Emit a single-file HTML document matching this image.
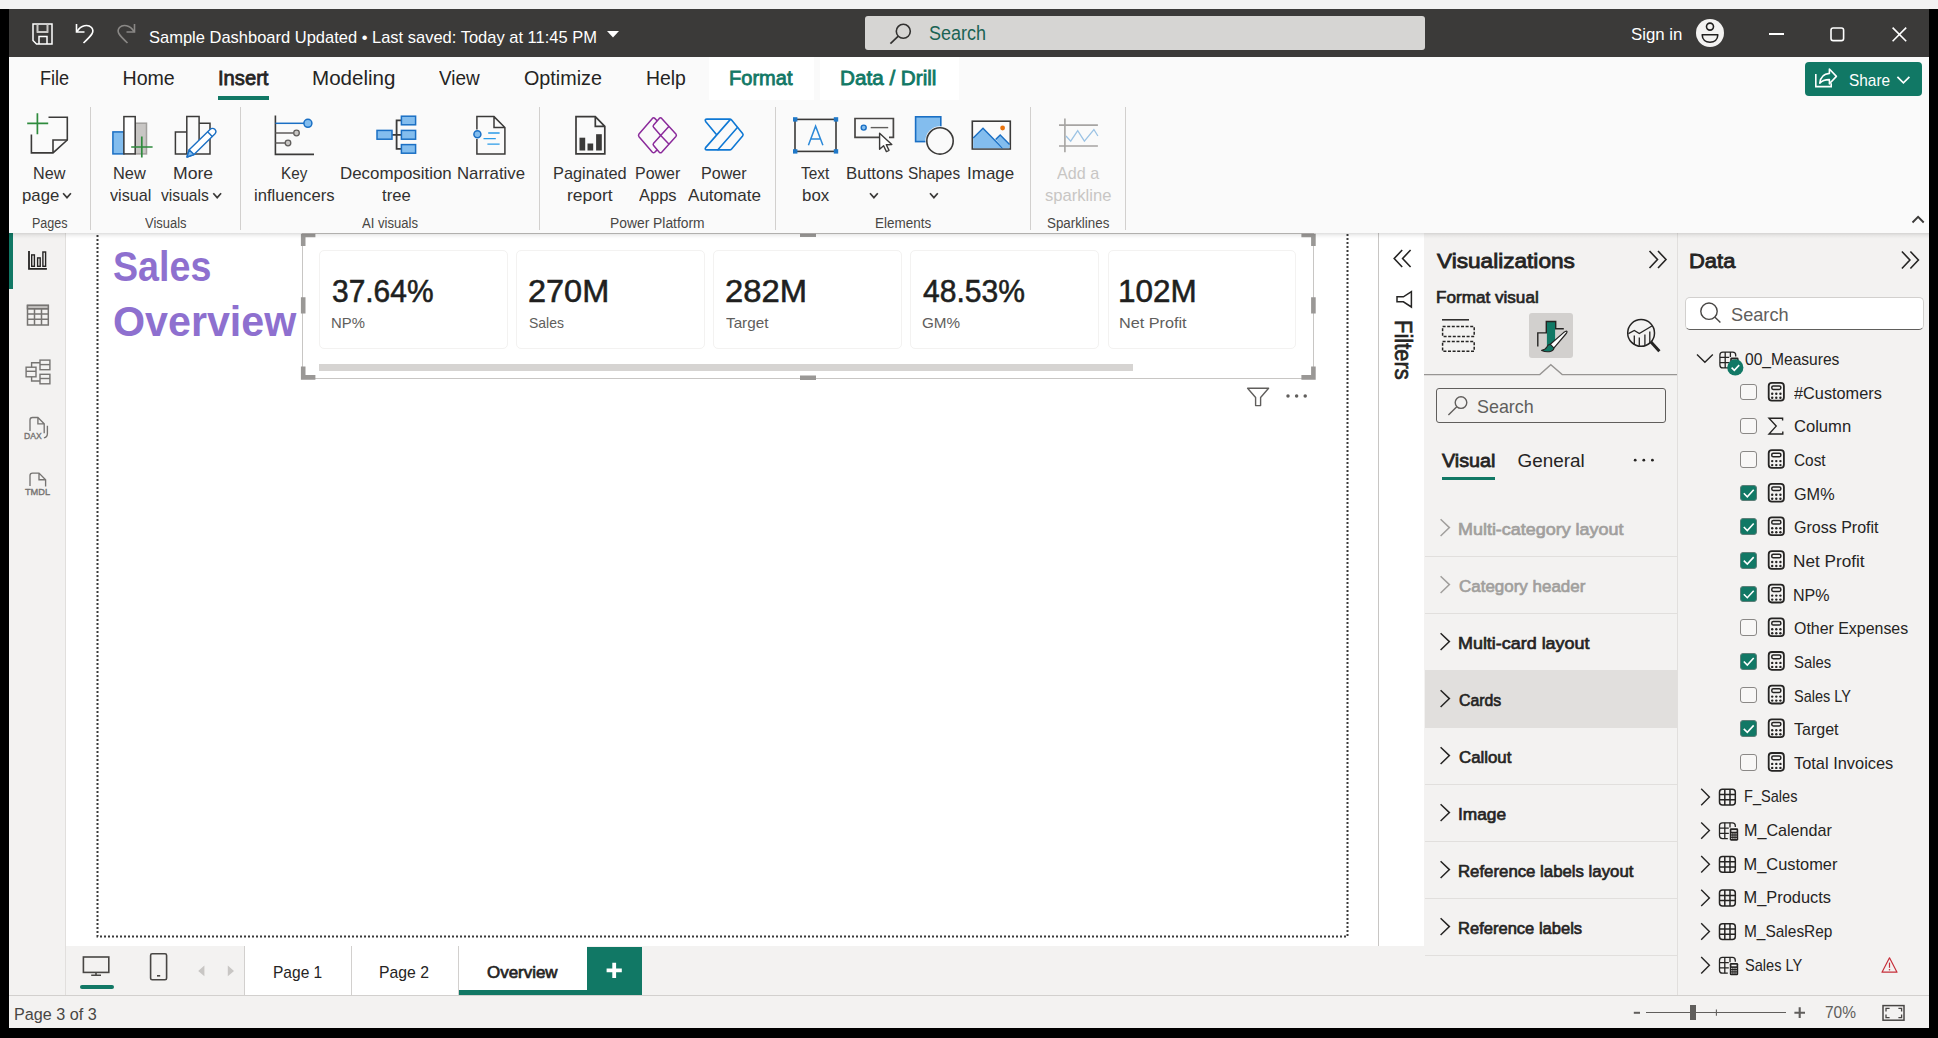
<!DOCTYPE html>
<html><head><meta charset="utf-8"><title>Power BI Desktop</title><style>
html,body{margin:0;padding:0;}
body{width:1938px;height:1038px;background:#000;position:relative;overflow:hidden;font-family:"Liberation Sans",sans-serif;}
body>div,body>svg,body>span{position:absolute;}
body>span{white-space:pre;line-height:1;transform-origin:0 0;}
svg{overflow:visible;}
</style></head>
<body>
<div style="left:0px;top:0px;width:1938px;height:9px;background:#f2f2f2;"></div>
<div style="left:9px;top:9px;width:1920px;height:48px;background:#3b3a39;"></div>
<div style="left:9px;top:57px;width:1920px;height:176px;background:#fafafa;"></div>
<div style="left:9px;top:233px;width:57px;height:763px;background:#f3f2f1;"></div>
<div style="left:65px;top:233px;width:1px;height:763px;background:#e1dfdd;"></div>
<div style="left:66px;top:233px;width:1313px;height:713px;background:#fff;"></div>
<div style="left:66px;top:946px;width:1359px;height:50px;background:#f3f2f1;"></div>
<div style="left:1378px;top:233px;width:1px;height:713px;background:#c8c6c4;"></div>
<div style="left:1379px;top:233px;width:45px;height:713px;background:#fff;"></div>
<div style="left:1424px;top:233px;width:505px;height:763px;background:#f3f2f1;"></div>
<div style="left:1677px;top:233px;width:1px;height:763px;background:#e1dfdd;"></div>
<div style="left:9px;top:995px;width:1920px;height:1px;background:#d2d0ce;"></div>
<div style="left:9px;top:996px;width:1920px;height:32px;background:#f3f2f1;"></div>
<svg style="left:32px;top:22.6px;" width="21" height="22" viewBox="0 0 21 22"><path d="M1 1h19v20H4.5L1 17.5z M5.5 1v8h10V1 M7 21v-7.5h8V21" fill="none" stroke="#fff" stroke-width="1.5"/><path d="M5.5 1v8h10V1" fill="none" stroke="#c8c6c4" stroke-width="1.5"/></svg>
<svg style="left:75px;top:23px;" width="20" height="21" viewBox="0 0 20 21"><path d="M1.5 1v8h8" fill="none" stroke="#fff" stroke-width="1.6"/><path d="M2 8.5C6 2 13 1 16.5 4.5 20 8.5 17 12 8.5 20" fill="none" stroke="#fff" stroke-width="1.6"/></svg>
<svg style="left:116px;top:23px;" width="20" height="21" viewBox="0 0 20 21"><path d="M18.5 1v8h-8" fill="none" stroke="#8a8886" stroke-width="1.6"/><path d="M18 8.5C14 2 7 1 3.5 4.5 0 8.5 3 12 11.5 20" fill="none" stroke="#8a8886" stroke-width="1.6"/></svg>
<span style="left:149.3px;top:29.0px;font-size:17px;color:#ffffff;transform:scaleX(0.9700);">Sample Dashboard Updated • Last saved: Today at 11:45 PM</span>
<svg style="left:607px;top:31px;" width="12" height="7" viewBox="0 0 12 7"><path d="M0 0h12L6 6.5z" fill="#fff"/></svg>
<div style="left:865px;top:16px;width:560px;height:34px;background:#d6d5d3;border-radius:3px;"></div>
<svg style="left:0;top:0" width="1938" height="1038" viewBox="0 0 1938 1038"><circle cx="903.3" cy="31.3" r="7" fill="none" stroke="#323130" stroke-width="1.6"/><path d="M898.3 36.2L890.4 43.6" stroke="#323130" stroke-width="1.7" fill="none"/></svg>
<span style="left:928.5px;top:24.0px;font-size:19.5px;color:#1b6354;transform:scaleX(0.9222);">Search</span>
<span style="left:1631.0px;top:26.0px;font-size:17px;color:#ffffff;transform:scaleX(0.9898);">Sign in</span>
<svg style="left:1696px;top:19px;" width="28" height="28" viewBox="0 0 28 28"><circle cx="14" cy="14" r="14" fill="#f3f2f1"/><circle cx="14" cy="7.6" r="3.5" fill="none" stroke="#201f1e" stroke-width="1.6"/><path d="M6.2 15.8h15.6c0 5-3.6 7.4-7.8 7.4s-7.8-2.4-7.8-7.4z" fill="none" stroke="#201f1e" stroke-width="1.6" stroke-linejoin="round"/></svg>
<div style="left:1769px;top:33px;width:15px;height:1.5px;background:#ffffff;"></div>
<svg style="left:1830px;top:27px;" width="16" height="16" viewBox="0 0 16 16"><rect x="1" y="1" width="12.6" height="12.6" rx="2.2" fill="none" stroke="#fff" stroke-width="1.6"/></svg>
<svg style="left:1892px;top:27px;" width="15" height="15" viewBox="0 0 15 15"><path d="M0.6 0.6l13.6 13.6M14.2 0.6l-13.6 13.6" stroke="#fff" stroke-width="1.6"/></svg>
<div style="left:709px;top:57px;width:104.5px;height:43px;background:#fff;"></div>
<div style="left:820px;top:57px;width:138.5px;height:43px;background:#fff;"></div>
<span style="left:40.1px;top:69.0px;font-size:19.6px;color:#252423;transform:scaleX(0.9226);">File</span>
<span style="left:122.5px;top:69.0px;font-size:19.6px;color:#252423;">Home</span>
<span style="left:217.5px;top:69.0px;font-size:19.6px;color:#252423;-webkit-text-stroke:0.78px #252423;transform:scaleX(1.0297);">Insert</span>
<span style="left:311.9px;top:69.0px;font-size:19.6px;color:#252423;transform:scaleX(1.0500);">Modeling</span>
<span style="left:439.0px;top:69.0px;font-size:19.6px;color:#252423;transform:scaleX(0.9659);">View</span>
<span style="left:524.0px;top:69.0px;font-size:19.6px;color:#252423;transform:scaleX(1.0077);">Optimize</span>
<span style="left:646.0px;top:69.0px;font-size:19.6px;color:#252423;transform:scaleX(0.9898);">Help</span>
<span style="left:729.0px;top:69.0px;font-size:19.6px;color:#117865;-webkit-text-stroke:0.78px #117865;transform:scaleX(1.0226);">Format</span>
<span style="left:840.4px;top:69.0px;font-size:19.6px;color:#117865;-webkit-text-stroke:0.78px #117865;transform:scaleX(1.0544);">Data / Drill</span>
<div style="left:218px;top:95.8px;width:51px;height:4px;background:#117865;"></div>
<div style="left:1805px;top:62px;width:117px;height:34px;background:#117865;border-radius:4px;"></div>
<svg style="left:0;top:0" width="1938" height="1038" viewBox="0 0 1938 1038"><g fill="none" stroke="#fff" stroke-width="1.6"><path d="M1815.8 74v12.6h15.4v-3.4"/><path d="M1829.4 69l7 7.4-7 7.4v-4.2c-4.4 0-7.4 1-9.6 3.6 .6-5.6 4-9.4 9.6-9.8z" stroke-linejoin="round"/><path d="M1897.4 76.8l6 6 6-6" stroke-width="1.7"/></g></svg>
<span style="left:1848.6px;top:72.0px;font-size:16.4px;color:#ffffff;transform:scaleX(0.9399);">Share</span>
<div style="left:90px;top:107px;width:1px;height:123px;background:#d2d0ce;"></div>
<div style="left:240px;top:107px;width:1px;height:123px;background:#d2d0ce;"></div>
<div style="left:539px;top:107px;width:1px;height:123px;background:#d2d0ce;"></div>
<div style="left:775px;top:107px;width:1px;height:123px;background:#d2d0ce;"></div>
<div style="left:1030px;top:107px;width:1px;height:123px;background:#d2d0ce;"></div>
<div style="left:1125px;top:107px;width:1px;height:123px;background:#d2d0ce;"></div>
<svg style="left:0;top:0" width="1938" height="1038" viewBox="0 0 1938 1038"><g fill="none" stroke="#3b3a39" stroke-width="1.6"><path d="M48.5 117.3H67.3V140L53 152.9H31.4V134.5"/><path d="M67.3 140H53V152.9" /></g><path d="M27.2 123.3h21M37.4 113.2v21" stroke="#2e8b3d" stroke-width="1.7" fill="none"/></svg>
<span style="left:32.6px;top:166.0px;font-size:16.6px;color:#323130;transform:scaleX(0.9755);">New</span>
<span style="left:22.3px;top:188.0px;font-size:16.6px;color:#323130;transform:scaleX(1.0116);">page</span>
<svg style="left:0;top:0" width="1938" height="1038" viewBox="0 0 1938 1038"><path d="M63.1 193.2l3.9 4.4 3.9 -4.4" fill="none" stroke="#3b3a39" stroke-width="1.7"/></svg>
<svg style="left:0;top:0" width="1938" height="1038" viewBox="0 0 1938 1038"><rect x="112.9" y="131.9" width="11" height="22" fill="#83bdee" stroke="#1a6fc4" stroke-width="1.5"/><rect x="135.2" y="123.2" width="11.3" height="30.7" fill="#c8c6c4" stroke="#a19f9d" stroke-width="1.5"/><rect x="123.9" y="116.6" width="11.3" height="37.3" fill="#fff" stroke="#3b3a39" stroke-width="1.5"/><path d="M131.2 147h21.4M141.8 136.5v21" stroke="#2e8b3d" stroke-width="1.7" fill="none"/></svg>
<span style="left:113.2px;top:166.0px;font-size:16.6px;color:#323130;transform:scaleX(0.9876);">New</span>
<span style="left:110.2px;top:188.0px;font-size:16.6px;color:#323130;transform:scaleX(0.9775);">visual</span>
<svg style="left:0;top:0" width="1938" height="1038" viewBox="0 0 1938 1038"><g fill="none" stroke="#3b3a39" stroke-width="1.5"><path d="M186.8 131.9H175.4V153.9H210V123.2H199.1"/><path d="M186.8 153.9V116.6H199.1V140"/></g><g stroke="#1a6fc4" stroke-width="1.4" stroke-linejoin="round"><path d="M187 157l2.2-7.3 20.8-20.3c1.5-1.5 3.6-1.3 4.8-.1 1.3 1.3 1.4 3.3 0 4.8L194 154.6z" fill="#fff"/><path d="M187 157l2.2-7.3 4.8 4.9z" fill="#83bdee"/><path d="M207.6 131.8l4.9 4.9" fill="none"/></g></svg>
<span style="left:173.1px;top:166.0px;font-size:16.6px;color:#323130;transform:scaleX(1.0608);">More</span>
<span style="left:161.4px;top:188.0px;font-size:16.6px;color:#323130;transform:scaleX(0.9440);">visuals</span>
<svg style="left:0;top:0" width="1938" height="1038" viewBox="0 0 1938 1038"><path d="M213.3 193.2l3.9 4.4 3.9 -4.4" fill="none" stroke="#3b3a39" stroke-width="1.7"/></svg>
<svg style="left:0;top:0" width="1938" height="1038" viewBox="0 0 1938 1038"><path d="M275.4 115.4V154.4H314" fill="none" stroke="#3b3a39" stroke-width="1.6"/><path d="M275.4 123.3H304" stroke="#1a6fc4" stroke-width="1.5"/><circle cx="307.9" cy="123.3" r="4" fill="#83bdee" stroke="#1a6fc4" stroke-width="1.5"/><path d="M275.4 133H293.5M275.4 143H285" stroke="#605e5c" stroke-width="1.5"/><circle cx="296.5" cy="133" r="2.8" fill="#c8c6c4" stroke="#605e5c" stroke-width="1.3"/><circle cx="288" cy="143" r="2.8" fill="#c8c6c4" stroke="#605e5c" stroke-width="1.3"/></svg>
<span style="left:281.1px;top:166.0px;font-size:16.6px;color:#323130;transform:scaleX(0.9188);">Key</span>
<span style="left:254.2px;top:188.0px;font-size:16.6px;color:#323130;transform:scaleX(1.0032);">influencers</span>
<svg style="left:0;top:0" width="1938" height="1038" viewBox="0 0 1938 1038"><path d="M392.1 134.8H401M401 120.4H396.6V148.9H401" fill="none" stroke="#3b3a39" stroke-width="1.8"/><g fill="#83bdee" stroke="#1a6fc4" stroke-width="1.5"><rect x="377" y="130.4" width="15" height="8.8"/><rect x="401.4" y="116.2" width="14.2" height="8.6"/><rect x="401.4" y="130.4" width="14.2" height="8.8"/><rect x="401.4" y="144.6" width="14.2" height="8.6"/></g></svg>
<span style="left:339.9px;top:166.0px;font-size:16.6px;color:#323130;transform:scaleX(1.0182);">Decomposition</span>
<span style="left:382.0px;top:188.0px;font-size:16.6px;color:#323130;transform:scaleX(1.0048);">tree</span>
<svg style="left:0;top:0" width="1938" height="1038" viewBox="0 0 1938 1038"><path d="M476.9 129.5V116.6H494L504.9 127.5V153.9H476.9V139M494 116.6V127.5H504.9" fill="none" stroke="#3b3a39" stroke-width="1.5"/><circle cx="477.4" cy="134.2" r="3.5" fill="#83bdee" stroke="#1a6fc4" stroke-width="1.5"/><path d="M488.2 133H499.6M483.5 138.6H495.8M487.4 144.2H499.6" stroke="#2b9be8" stroke-width="1.3"/></svg>
<span style="left:456.9px;top:166.0px;font-size:16.6px;color:#323130;transform:scaleX(1.0108);">Narrative</span>
<svg style="left:0;top:0" width="1938" height="1038" viewBox="0 0 1938 1038"><path d="M576 116.7H595.3L604.8 126.3V153.8H576zM595.3 116.7V126.3H604.8" fill="none" stroke="#3b3a39" stroke-width="1.7"/><g fill="#3b3a39"><rect x="579.5" y="137.7" width="5.7" height="12.8"/><rect x="587.5" y="143.5" width="5.7" height="7"/><rect x="596.1" y="134.2" width="5.7" height="16.3"/></g></svg>
<span style="left:553.4px;top:166.0px;font-size:16.6px;color:#323130;transform:scaleX(0.9849);">Paginated</span>
<span style="left:566.9px;top:188.0px;font-size:16.6px;color:#323130;transform:scaleX(1.0529);">report</span>
<svg style="left:0;top:0" width="1938" height="1038" viewBox="0 0 1938 1038"><g fill="none" stroke="#8b2a9b" stroke-width="1.5" stroke-linejoin="round" stroke-linecap="round"><path d="M656.6 120.2L654.8 118.4Q653.6 117.2 652.4 118.4L639 133.9Q638 135.3 639 136.7L652.4 152.2Q653.6 153.4 654.8 152.2L656.6 150.4"/><path d="M660.5 135.2L653.6 127.3Q652.6 126.1 653.6 124.9L659.3 118.4Q660.5 117.2 661.7 118.4L675.9 133.9Q676.9 135.2 675.9 136.5L661.7 152.2Q660.5 153.4 659.3 152.2L653.6 145.6Q652.6 144.4 653.6 143.2L668.6 126.8"/><path d="M660.5 135.2L668.6 143.8"/></g></svg>
<span style="left:634.6px;top:166.0px;font-size:16.6px;color:#323130;transform:scaleX(0.9633);">Power</span>
<span style="left:639.0px;top:188.0px;font-size:16.6px;color:#323130;transform:scaleX(0.9940);">Apps</span>
<svg style="left:0;top:0" width="1938" height="1038" viewBox="0 0 1938 1038"><g fill="none" stroke="#0f78d4" stroke-width="1.6" stroke-linejoin="round" stroke-linecap="round"><path d="M716.2 134.3L705.6 121.5Q704.4 119.2 707 119.1H729.6Q730.8 119.1 731.6 120.1L742.6 133.5Q743.6 134.8 742.6 136.1L731.6 149Q730.8 149.9 729.6 149.9H707Q704.4 149.8 705.6 147.6L730.4 119.4"/><path d="M737.4 127.5L717.9 149.7"/></g></svg>
<span style="left:701.3px;top:166.0px;font-size:16.6px;color:#323130;transform:scaleX(0.9719);">Power</span>
<span style="left:688.2px;top:188.0px;font-size:16.6px;color:#323130;transform:scaleX(1.0283);">Automate</span>
<svg style="left:0;top:0" width="1938" height="1038" viewBox="0 0 1938 1038"><rect x="795" y="119.4" width="41" height="32" fill="none" stroke="#3b3a39" stroke-width="1.6"/><g fill="#1f78c8"><rect x="793" y="117.2" width="4.4" height="4.4"/><rect x="833.8" y="117.2" width="4.4" height="4.4"/><rect x="793" y="149.2" width="4.4" height="4.4"/><rect x="833.8" y="149.2" width="4.4" height="4.4"/></g><path d="M808.4 145.2L815.6 126.2 822.9 145.2M810.8 139H820.5" fill="none" stroke="#2b88d8" stroke-width="1.5"/></svg>
<span style="left:801.4px;top:166.0px;font-size:16.6px;color:#323130;transform:scaleX(0.9279);">Text</span>
<span style="left:801.6px;top:188.0px;font-size:16.6px;color:#323130;transform:scaleX(1.0167);">box</span>
<svg style="left:0;top:0" width="1938" height="1038" viewBox="0 0 1938 1038"><path d="M879 137.4H855V118.5H893.4V137.4H889" fill="none" stroke="#484644" stroke-width="1.7"/><circle cx="863.7" cy="127.6" r="2.5" fill="#83bdee" stroke="#1a6fc4" stroke-width="1.4"/><path d="M870.7 127.6H888.2" stroke="#605e5c" stroke-width="1.4"/><path d="M879.6 133.3V149.3L883.6 145.8 886.4 151.6 889 150.4 886.3 144.7 891.8 144.5z" fill="#fff" stroke="#3b3a39" stroke-width="1.4" stroke-linejoin="round"/></svg>
<span style="left:845.7px;top:166.0px;font-size:16.6px;color:#323130;transform:scaleX(1.0168);">Buttons</span>
<svg style="left:0;top:0" width="1938" height="1038" viewBox="0 0 1938 1038"><path d="M870 193.2l3.9 4.4 3.9 -4.4" fill="none" stroke="#3b3a39" stroke-width="1.7"/></svg>
<svg style="left:0;top:0" width="1938" height="1038" viewBox="0 0 1938 1038"><rect x="915.6" y="116.8" width="25.2" height="24.8" fill="#83bdee" stroke="#1a6fc4" stroke-width="1.6"/><circle cx="940" cy="140.9" r="14.6" fill="#fafafa"/><circle cx="940" cy="140.9" r="13.2" fill="#fafafa" stroke="#3b3a39" stroke-width="1.6"/></svg>
<span style="left:908.4px;top:166.0px;font-size:16.6px;color:#323130;transform:scaleX(0.9253);">Shapes</span>
<svg style="left:0;top:0" width="1938" height="1038" viewBox="0 0 1938 1038"><path d="M930 193.2l3.9 4.4 3.9 -4.4" fill="none" stroke="#3b3a39" stroke-width="1.7"/></svg>
<svg style="left:0;top:0" width="1938" height="1038" viewBox="0 0 1938 1038"><rect x="972.3" y="121.2" width="38" height="27.8" fill="#fafafa" stroke="#3b3a39" stroke-width="1.6"/><path d="M973.2 148.2V138L983 128.2 1002.6 148.2z" fill="#83bdee"/><path d="M973.2 138L983 128.2 1002.6 148.2" fill="none" stroke="#1a6fc4" stroke-width="1.4"/><path d="M995.6 139.6L1000.2 135.1 1009.6 144.4V148.2H1003z" fill="#83bdee"/><path d="M995.6 139.6L1000.2 135.1 1009.6 144.4" fill="none" stroke="#1a6fc4" stroke-width="1.4"/><circle cx="1002.6" cy="128" r="2.4" fill="#e8710a"/></svg>
<span style="left:967.0px;top:166.0px;font-size:16.6px;color:#323130;transform:scaleX(1.0247);">Image</span>
<svg style="left:0;top:0" width="1938" height="1038" viewBox="0 0 1938 1038"><path d="M1064.9 118.4V152.3M1059 125.1H1097.9M1059 146H1097.9" stroke="#a6a4a2" stroke-width="1.6" fill="none"/><path d="M1066 136L1070.7 141.2 1077.7 130.7 1084.4 141.2 1093.9 129.5 1097.9 136" fill="none" stroke="#9cc3e4" stroke-width="1.3"/></svg>
<span style="left:1056.7px;top:166.0px;font-size:16.6px;color:#c8c6c4;transform:scaleX(0.9720);">Add a</span>
<span style="left:1045.0px;top:188.0px;font-size:16.6px;color:#c8c6c4;">sparkline</span>
<span style="left:31.5px;top:216.0px;font-size:14px;color:#484644;transform:scaleX(0.8967);">Pages</span>
<span style="left:145.0px;top:216.0px;font-size:14px;color:#484644;transform:scaleX(0.9247);">Visuals</span>
<span style="left:362.0px;top:216.0px;font-size:14px;color:#484644;transform:scaleX(0.9347);">AI visuals</span>
<span style="left:610.0px;top:216.0px;font-size:14px;color:#484644;transform:scaleX(0.9890);">Power Platform</span>
<span style="left:875.0px;top:216.0px;font-size:14px;color:#484644;transform:scaleX(0.9624);">Elements</span>
<span style="left:1047.0px;top:216.0px;font-size:14px;color:#484644;transform:scaleX(0.9531);">Sparklines</span>
<svg style="left:0;top:0" width="1938" height="1038" viewBox="0 0 1938 1038"><path d="M1912.5 222.5l5.6-5.6 5.6 5.6" fill="none" stroke="#3b3a39" stroke-width="1.9"/></svg>
<div style="left:9px;top:233px;width:4px;height:55.8px;background:#117865;"></div>
<svg style="left:0;top:0" width="1938" height="1038" viewBox="0 0 1938 1038"><g fill="none" stroke="#252423"><path d="M29 251V268.9H46.9" stroke-width="1.8"/><g stroke-width="1.4"><rect x="31.7" y="254.9" width="2.7" height="11.4"/><rect x="37.6" y="257.9" width="2.6" height="8.4"/><rect x="42.9" y="252" width="2.7" height="14.3"/></g></g></svg>
<svg style="left:0;top:0" width="1938" height="1038" viewBox="0 0 1938 1038"><g fill="none" stroke="#767472" stroke-width="1.5"><rect x="27.5" y="305.4" width="20.8" height="19.6"/><rect x="27.5" y="305.4" width="20.8" height="3.3" fill="#c8c6c4"/><path d="M27.5 308.7H48.3M27.5 313.9H48.3M27.5 319.2H48.3M34.5 308.7V325M41.5 308.7V325"/></g></svg>
<svg style="left:0;top:0" width="1938" height="1038" viewBox="0 0 1938 1038"><g fill="none" stroke="#767472" stroke-width="1.4"><rect x="26.1" y="367.2" width="9.9" height="9.6"/><path d="M26.1 371.3H36"/><rect x="40" y="360.1" width="9.9" height="9.6"/><path d="M40 364.6H49.9"/><rect x="40" y="374.3" width="9.9" height="9.5"/><path d="M40 378.5H49.9"/><path d="M31.6 367.2V362.8H40M31.6 376.8V381H40"/></g></svg>
<svg style="left:0;top:0" width="1938" height="1038" viewBox="0 0 1938 1038"><g fill="none" stroke="#767472" stroke-width="1.35"><path d="M30 431V420Q30 417.5 32.5 417.5H37.9L44.2 423.8V433.2M37.9 417.6V423.8H44.2"/><path d="M47.4 425.8V433.6Q47.4 437.4 43.9 437.8"/></g></svg>
<span style="left:23.9px;top:431.0px;font-size:9.4px;color:#767472;-webkit-text-stroke:0.38px #767472;transform:scaleX(0.9139);">DAX</span>
<svg style="left:0;top:0" width="1938" height="1038" viewBox="0 0 1938 1038"><g fill="none" stroke="#767472" stroke-width="1.35"><path d="M30 486V475.6Q30 473.1 32.5 473.1H39L45.6 479.7V486.4M39 473.2V479.7H45.6"/></g></svg>
<span style="left:25.2px;top:487.0px;font-size:9.6px;color:#767472;-webkit-text-stroke:0.38px #767472;transform:scaleX(0.9597);">TMDL</span>
<svg style="left:0;top:0" width="1938" height="1038" viewBox="0 0 1938 1038"><path d="M97.5 233V936.5H1347.5V233" fill="none" stroke="#3a3a3a" stroke-width="2" stroke-dasharray="2 2" stroke-dashoffset="-2"/></svg>
<span style="left:113.4px;top:246.0px;font-size:42.3px;color:#8e70cf;font-weight:700;transform:scaleX(0.8897);">Sales</span>
<span style="left:113.2px;top:301.0px;font-size:42.3px;color:#8e70cf;font-weight:700;transform:scaleX(0.9743);">Overview</span>
<div style="left:302.4px;top:233.4px;width:1011.9px;height:145.6px;background:#fff;border:1px solid #c8c6c4;box-sizing:border-box;"></div>
<div style="left:319.3px;top:250.3px;width:188.4px;height:98.4px;background:#fff;border:1px solid #f3f2f1;border-radius:5px;box-sizing:border-box;"></div>
<span style="left:331.6px;top:276.0px;font-size:30.5px;color:#201f1e;-webkit-text-stroke:0.55px #201f1e;transform:scaleX(0.9812);">37.64%</span>
<span style="left:331.0px;top:316.0px;font-size:14.8px;color:#605e5c;transform:scaleX(1.0044);">NP%</span>
<div style="left:516.35px;top:250.3px;width:188.4px;height:98.4px;background:#fff;border:1px solid #f3f2f1;border-radius:5px;box-sizing:border-box;"></div>
<span style="left:528.2px;top:276.0px;font-size:30.5px;color:#201f1e;-webkit-text-stroke:0.55px #201f1e;transform:scaleX(1.0646);">270M</span>
<span style="left:528.7px;top:316.0px;font-size:14.8px;color:#605e5c;transform:scaleX(0.9450);">Sales</span>
<div style="left:713.4px;top:250.3px;width:188.4px;height:98.4px;background:#fff;border:1px solid #f3f2f1;border-radius:5px;box-sizing:border-box;"></div>
<span style="left:725.2px;top:276.0px;font-size:30.5px;color:#201f1e;-webkit-text-stroke:0.55px #201f1e;transform:scaleX(1.0743);">282M</span>
<span style="left:725.7px;top:316.0px;font-size:14.8px;color:#605e5c;transform:scaleX(1.0314);">Target</span>
<div style="left:910.45px;top:250.3px;width:188.4px;height:98.4px;background:#fff;border:1px solid #f3f2f1;border-radius:5px;box-sizing:border-box;"></div>
<span style="left:923.0px;top:276.0px;font-size:30.5px;color:#201f1e;-webkit-text-stroke:0.55px #201f1e;transform:scaleX(0.9852);">48.53%</span>
<span style="left:922.4px;top:316.0px;font-size:14.8px;color:#605e5c;transform:scaleX(1.0316);">GM%</span>
<div style="left:1107.5px;top:250.3px;width:188.4px;height:98.4px;background:#fff;border:1px solid #f3f2f1;border-radius:5px;box-sizing:border-box;"></div>
<span style="left:1118.1px;top:276.0px;font-size:30.5px;color:#201f1e;-webkit-text-stroke:0.55px #201f1e;transform:scaleX(1.0308);">102M</span>
<span style="left:1118.5px;top:316.0px;font-size:14.8px;color:#605e5c;transform:scaleX(1.0964);">Net Profit</span>
<div style="left:319.2px;top:364px;width:814.2px;height:7.3px;background:#d6d4d2;"></div>
<svg style="left:0;top:0" width="1938" height="1038" viewBox="0 0 1938 1038"><clipPath id="cv"><rect x="66" y="233.8" width="1313" height="712"/></clipPath><g clip-path="url(#cv)" fill="none" stroke="#9a9896" stroke-width="4.6"><path d="M303.2 246V235H315.4"/><path d="M1301.4 235H1313.4V246"/><path d="M303.2 366.4V377.4H315.4"/><path d="M1301.4 377.4H1313.4V366.4"/><path d="M800 234.8H816M800 377.8H816M303.2 297.2V313.6M1313.4 297.2V313.6"/></g></svg>
<svg style="left:0;top:0" width="1938" height="1038" viewBox="0 0 1938 1038"><path d="M1247.6 388.2H1268.6L1260.6 397.5V405.6H1255.6V397.5z" fill="none" stroke="#605e5c" stroke-width="1.4" stroke-linejoin="round"/><g fill="#605e5c"><circle cx="1288" cy="396" r="1.75"/><circle cx="1296.6" cy="396" r="1.75"/><circle cx="1305.2" cy="396" r="1.75"/></g></svg>
<svg style="left:0;top:0" width="1938" height="1038" viewBox="0 0 1938 1038"><g fill="none" stroke="#252423" stroke-width="1.6"><path d="M1402.2 250l-8 8.5 8 8.5M1410.6 250l-8 8.5 8 8.5"/><path d="M1411.4 291.6V307L1403.4 301.8H1397V296.8H1403.4z" stroke-linejoin="miter" stroke-width="1.5"/></g></svg>
<span style="left:1414.6px;top:319.6px;font-size:24.4px;-webkit-text-stroke:0.7px #252423;color:#252423;transform:rotate(90deg) scaleX(0.9);transform-origin:0 0;">Filters</span>
<span style="left:1437.0px;top:251.0px;font-size:20.8px;color:#252423;-webkit-text-stroke:0.83px #252423;transform:scaleX(1.0872);">Visualizations</span>
<svg style="left:0;top:0" width="1938" height="1038" viewBox="0 0 1938 1038"><g fill="none" stroke="#252423" stroke-width="1.6"><path d="M1649.5 251l8 8.5-8 8.5M1658 251l8 8.5-8 8.5"/><path d="M1901.9 251.5l8 8.5-8 8.5M1910.4 251.5l8 8.5-8 8.5"/></g></svg>
<span style="left:1435.9px;top:289.0px;font-size:16.3px;color:#252423;-webkit-text-stroke:0.65px #252423;transform:scaleX(1.0511);">Format visual</span>
<div style="left:1529.4px;top:313.3px;width:43.8px;height:44.7px;background:#d2d0ce;border-radius:3px;"></div>
<svg style="left:0;top:0" width="1938" height="1038" viewBox="0 0 1938 1038"><g fill="none" stroke="#252423" stroke-width="1.5"><path d="M1442 319.8H1469"/><g stroke-dasharray="3 1.6"><rect x="1442.6" y="326.6" width="31.6" height="9.8"/><rect x="1442.6" y="341.6" width="31.6" height="9.6"/></g></g></svg>
<svg style="left:0;top:0" width="1938" height="1038" viewBox="0 0 1938 1038"><rect x="1546.9" y="322" width="8.2" height="25" fill="#117865"/><path d="M1537.8 346.6V332.9H1546.3V321.5H1555.7V328.7H1563.8" stroke="#252423" stroke-width="1.4" fill="none"/><path d="M1549.2 345.2L1563.6 332.6Q1566.2 330.6 1566.9 331.3 1567.5 332.1 1565.4 334.5L1553.4 348.6z" fill="#fff" stroke="#252423" stroke-width="1.2" stroke-linejoin="round"/><path d="M1541.6 350.4Q1545.6 349.6 1546.8 347 1548 344.2 1550.4 344.4L1553.8 347.8Q1554.2 350 1551 351.2 1546.6 352.6 1541.6 350.4z" fill="#117865" stroke="#252423" stroke-width="1.1" stroke-linejoin="round"/></svg>
<svg style="left:0;top:0" width="1938" height="1038" viewBox="0 0 1938 1038"><g fill="none" stroke="#252423" stroke-width="1.5"><circle cx="1641.1" cy="332.9" r="13.4"/><path d="M1651 342L1659.4 351.2" stroke-width="3"/><path d="M1628.4 333.6L1634.3 330.4 1639.3 333.6 1651.9 326" stroke-width="1.3"/><path d="M1634.3 335.6V344.4M1639.3 337.6V345.8M1644.9 334.6V345.6M1649.8 331.4V343" stroke-width="1.3"/></g></svg>
<svg style="left:0;top:0" width="1938" height="1038" viewBox="0 0 1938 1038"><path d="M1424 374.6H1539.8L1550.8 364.8 1562.2 374.6H1677" fill="none" stroke="#979593" stroke-width="1.4"/></svg>
<div style="left:1436.4px;top:387.5px;width:229.6px;height:35.2px;background:#f3f2f1;border:1px solid #605e5c;border-radius:3px;box-sizing:border-box;"></div>
<svg style="left:0;top:0" width="1938" height="1038" viewBox="0 0 1938 1038"><g fill="none" stroke="#605e5c" stroke-width="1.4"><circle cx="1461" cy="402.6" r="5.8"/><path d="M1456.8 406.8L1448.4 415"/></g></svg>
<span style="left:1477.3px;top:397.0px;font-size:19px;color:#605e5c;transform:scaleX(0.9424);">Search</span>
<span style="left:1442.4px;top:452.0px;font-size:18.9px;color:#252423;-webkit-text-stroke:0.76px #252423;transform:scaleX(1.0438);">Visual</span>
<div style="left:1442px;top:477px;width:53px;height:3.2px;background:#117865;"></div>
<span style="left:1517.6px;top:452.0px;font-size:18.9px;color:#252423;">General</span>
<svg style="left:0;top:0" width="1938" height="1038" viewBox="0 0 1938 1038"><g fill="#252423"><circle cx="1635.2" cy="460.2" r="1.4"/><circle cx="1643.8" cy="460.2" r="1.4"/><circle cx="1652.4" cy="460.2" r="1.4"/></g></svg>
<div style="left:1425px;top:670px;width:252px;height:58px;background:#e1dfdd;"></div>
<div style="left:1425px;top:556px;width:252px;height:1px;background:#e1dfdd;"></div>
<span style="left:1458.1px;top:522.0px;font-size:16.6px;color:#a19f9d;-webkit-text-stroke:0.66px #a19f9d;transform:scaleX(1.0808);">Multi-category layout</span>
<svg style="left:0;top:0" width="1938" height="1038" viewBox="0 0 1938 1038"><path d="M1440.6 519.2l8.8 8.4-8.8 8.4" fill="none" stroke="#a19f9d" stroke-width="1.5"/></svg>
<div style="left:1425px;top:613px;width:252px;height:1px;background:#e1dfdd;"></div>
<span style="left:1459.2px;top:579.0px;font-size:16.6px;color:#a19f9d;-webkit-text-stroke:0.66px #a19f9d;transform:scaleX(1.0219);">Category header</span>
<svg style="left:0;top:0" width="1938" height="1038" viewBox="0 0 1938 1038"><path d="M1440.6 576.2l8.8 8.4-8.8 8.4" fill="none" stroke="#a19f9d" stroke-width="1.5"/></svg>
<div style="left:1425px;top:670px;width:252px;height:1px;background:#e1dfdd;"></div>
<span style="left:1458.1px;top:636.0px;font-size:16.6px;color:#252423;-webkit-text-stroke:0.66px #252423;transform:scaleX(1.0799);">Multi-card layout</span>
<svg style="left:0;top:0" width="1938" height="1038" viewBox="0 0 1938 1038"><path d="M1440.6 633.2l8.8 8.4-8.8 8.4" fill="none" stroke="#252423" stroke-width="1.5"/></svg>
<div style="left:1425px;top:727px;width:252px;height:1px;background:#e1dfdd;"></div>
<span style="left:1459.2px;top:693.0px;font-size:16.6px;color:#252423;-webkit-text-stroke:0.66px #252423;transform:scaleX(0.9553);">Cards</span>
<svg style="left:0;top:0" width="1938" height="1038" viewBox="0 0 1938 1038"><path d="M1440.6 690.2l8.8 8.4-8.8 8.4" fill="none" stroke="#252423" stroke-width="1.5"/></svg>
<div style="left:1425px;top:784px;width:252px;height:1px;background:#e1dfdd;"></div>
<span style="left:1459.2px;top:750.0px;font-size:16.6px;color:#252423;-webkit-text-stroke:0.66px #252423;transform:scaleX(1.0146);">Callout</span>
<svg style="left:0;top:0" width="1938" height="1038" viewBox="0 0 1938 1038"><path d="M1440.6 747.2l8.8 8.4-8.8 8.4" fill="none" stroke="#252423" stroke-width="1.5"/></svg>
<div style="left:1425px;top:841px;width:252px;height:1px;background:#e1dfdd;"></div>
<span style="left:1458.2px;top:807.0px;font-size:16.6px;color:#252423;-webkit-text-stroke:0.66px #252423;transform:scaleX(1.0425);">Image</span>
<svg style="left:0;top:0" width="1938" height="1038" viewBox="0 0 1938 1038"><path d="M1440.6 804.2l8.8 8.4-8.8 8.4" fill="none" stroke="#252423" stroke-width="1.5"/></svg>
<div style="left:1425px;top:898px;width:252px;height:1px;background:#e1dfdd;"></div>
<span style="left:1458.2px;top:864.0px;font-size:16.6px;color:#252423;-webkit-text-stroke:0.66px #252423;transform:scaleX(1.0115);">Reference labels layout</span>
<svg style="left:0;top:0" width="1938" height="1038" viewBox="0 0 1938 1038"><path d="M1440.6 861.2l8.8 8.4-8.8 8.4" fill="none" stroke="#252423" stroke-width="1.5"/></svg>
<div style="left:1425px;top:955px;width:252px;height:1px;background:#e1dfdd;"></div>
<span style="left:1458.2px;top:921.0px;font-size:16.6px;color:#252423;-webkit-text-stroke:0.66px #252423;transform:scaleX(0.9965);">Reference labels</span>
<svg style="left:0;top:0" width="1938" height="1038" viewBox="0 0 1938 1038"><path d="M1440.6 918.2l8.8 8.4-8.8 8.4" fill="none" stroke="#252423" stroke-width="1.5"/></svg>
<span style="left:1688.7px;top:251.0px;font-size:20.8px;color:#252423;-webkit-text-stroke:0.83px #252423;transform:scaleX(1.0562);">Data</span>
<div style="left:1684.6px;top:297.4px;width:239px;height:32.6px;background:#fff;border:1px solid #d2d0ce;border-bottom:1.5px solid #605e5c;border-radius:5px;box-sizing:border-box;"></div>
<svg style="left:0;top:0" width="1938" height="1038" viewBox="0 0 1938 1038"><g fill="none" stroke="#484644" stroke-width="1.4"><circle cx="1709" cy="311.2" r="8.2"/><path d="M1715 317.2L1720.4 322.4"/></g></svg>
<span style="left:1731.3px;top:305.0px;font-size:19px;color:#605e5c;transform:scaleX(0.9575);">Search</span>
<svg style="left:0;top:0" width="1938" height="1038" viewBox="0 0 1938 1038"><path d="M1697 354.4l7.9 7.9 7.9-7.9" fill="none" stroke="#252423" stroke-width="1.4"/></svg>
<svg style="left:0;top:0" width="1938" height="1038" viewBox="0 0 1938 1038"><g fill="none" stroke="#252423" stroke-width="1.3"><path d="M1728.2 367.9H1722.9Q1719.9 367.9 1719.9 364.9V355.1Q1719.9 352.1 1722.9 352.1H1732.7Q1735.7 352.1 1735.7 355.1V356.4"/><path d="M1719.9 357.4H1729.2M1719.9 362.6H1729.2M1725.2 352.1V367.9M1730.4 352.1V356.9"/></g><rect x="1730.2" y="357.6" width="8.4" height="12.4" rx="1.4" fill="#252423"/><rect x="1731.8" y="359.4" width="5.2" height="1.6" fill="#f3f2f1"/><g fill="#f3f2f1"><rect x="1731.7" y="362.6" width="1.1" height="1.1"/><rect x="1733.8" y="362.6" width="1.1" height="1.1"/><rect x="1735.9" y="362.6" width="1.1" height="1.1"/><rect x="1731.7" y="364.9" width="1.1" height="1.1"/><rect x="1733.8" y="364.9" width="1.1" height="1.1"/><rect x="1735.9" y="364.9" width="1.1" height="1.1"/><rect x="1731.7" y="367.2" width="1.1" height="1.1"/><rect x="1733.8" y="367.2" width="1.1" height="1.1"/><rect x="1735.9" y="367.2" width="1.1" height="1.1"/></g></svg>
<svg style="left:0;top:0" width="1938" height="1038" viewBox="0 0 1938 1038"><circle cx="1735.3" cy="367.4" r="8.1" fill="#117865"/><path d="M1731.6 367.6l2.7 2.7 4.9-5.2" fill="none" stroke="#fff" stroke-width="1.6"/></svg>
<span style="left:1745.4px;top:351.0px;font-size:16.4px;color:#252423;transform:scaleX(0.9504);">00_Measures</span>
<div style="left:1740.2px;top:383.84999999999997px;width:16.6px;height:16.6px;background:#f8f7f6;border:1px solid #8a8886;border-radius:3px;box-sizing:border-box;"></div>
<svg style="left:0;top:0" width="1938" height="1038" viewBox="0 0 1938 1038"><rect x="1768.7" y="382.8" width="15.2" height="17.8" rx="3.2" fill="none" stroke="#252423" stroke-width="1.8"/><rect x="1771.8" y="385.9" width="9" height="3.6" rx="1.4" fill="none" stroke="#252423" stroke-width="1.5"/><g fill="#252423"><circle cx="1772.2" cy="393.8" r="1.2"/><circle cx="1776.3" cy="393.8" r="1.2"/><circle cx="1780.4" cy="393.8" r="1.2"/><circle cx="1772.2" cy="397.8" r="1.2"/><circle cx="1776.3" cy="397.8" r="1.2"/><circle cx="1780.4" cy="397.8" r="1.2"/></g></svg>
<span style="left:1794.0px;top:385.0px;font-size:16.4px;color:#252423;transform:scaleX(0.9936);">#Customers</span>
<div style="left:1740.2px;top:417.5px;width:16.6px;height:16.6px;background:#f8f7f6;border:1px solid #8a8886;border-radius:3px;box-sizing:border-box;"></div>
<svg style="left:0;top:0" width="1938" height="1038" viewBox="0 0 1938 1038"><path d="M1782.6 420.6V418.2H1769L1776.2 426.1 1769 434.0H1782.8V431.6" fill="none" stroke="#252423" stroke-width="1.4" stroke-linejoin="miter"/></svg>
<span style="left:1794.0px;top:418.0px;font-size:16.4px;color:#252423;transform:scaleX(1.0113);">Column</span>
<div style="left:1740.2px;top:451.15px;width:16.6px;height:16.6px;background:#f8f7f6;border:1px solid #8a8886;border-radius:3px;box-sizing:border-box;"></div>
<svg style="left:0;top:0" width="1938" height="1038" viewBox="0 0 1938 1038"><rect x="1768.7" y="450.1" width="15.2" height="17.8" rx="3.2" fill="none" stroke="#252423" stroke-width="1.8"/><rect x="1771.8" y="453.2" width="9" height="3.6" rx="1.4" fill="none" stroke="#252423" stroke-width="1.5"/><g fill="#252423"><circle cx="1772.2" cy="461.1" r="1.2"/><circle cx="1776.3" cy="461.1" r="1.2"/><circle cx="1780.4" cy="461.1" r="1.2"/><circle cx="1772.2" cy="465.1" r="1.2"/><circle cx="1776.3" cy="465.1" r="1.2"/><circle cx="1780.4" cy="465.1" r="1.2"/></g></svg>
<span style="left:1794.0px;top:452.0px;font-size:16.4px;color:#252423;transform:scaleX(0.9371);">Cost</span>
<div style="left:1740.2px;top:484.8px;width:16.6px;height:16.6px;background:#117865;border-radius:3px;border:1px solid #5c7f78;box-sizing:border-box;"></div>
<svg style="left:0;top:0" width="1938" height="1038" viewBox="0 0 1938 1038"><path d="M1743.8 493.3l3.5 3.5 6.4-7" fill="none" stroke="#fff" stroke-width="1.6"/></svg>
<svg style="left:0;top:0" width="1938" height="1038" viewBox="0 0 1938 1038"><rect x="1768.7" y="483.8" width="15.2" height="17.8" rx="3.2" fill="none" stroke="#252423" stroke-width="1.8"/><rect x="1771.8" y="486.9" width="9" height="3.6" rx="1.4" fill="none" stroke="#252423" stroke-width="1.5"/><g fill="#252423"><circle cx="1772.2" cy="494.7" r="1.2"/><circle cx="1776.3" cy="494.7" r="1.2"/><circle cx="1780.4" cy="494.7" r="1.2"/><circle cx="1772.2" cy="498.7" r="1.2"/><circle cx="1776.3" cy="498.7" r="1.2"/><circle cx="1780.4" cy="498.7" r="1.2"/></g></svg>
<span style="left:1794.0px;top:486.0px;font-size:16.4px;color:#252423;transform:scaleX(0.9900);">GM%</span>
<div style="left:1740.2px;top:518.45px;width:16.6px;height:16.6px;background:#117865;border-radius:3px;border:1px solid #5c7f78;box-sizing:border-box;"></div>
<svg style="left:0;top:0" width="1938" height="1038" viewBox="0 0 1938 1038"><path d="M1743.8 527.0l3.5 3.5 6.4-7" fill="none" stroke="#fff" stroke-width="1.6"/></svg>
<svg style="left:0;top:0" width="1938" height="1038" viewBox="0 0 1938 1038"><rect x="1768.7" y="517.4" width="15.2" height="17.8" rx="3.2" fill="none" stroke="#252423" stroke-width="1.8"/><rect x="1771.8" y="520.5" width="9" height="3.6" rx="1.4" fill="none" stroke="#252423" stroke-width="1.5"/><g fill="#252423"><circle cx="1772.2" cy="528.3" r="1.2"/><circle cx="1776.3" cy="528.3" r="1.2"/><circle cx="1780.4" cy="528.3" r="1.2"/><circle cx="1772.2" cy="532.3" r="1.2"/><circle cx="1776.3" cy="532.3" r="1.2"/><circle cx="1780.4" cy="532.3" r="1.2"/></g></svg>
<span style="left:1794.0px;top:519.0px;font-size:16.4px;color:#252423;transform:scaleX(0.9774);">Gross Profit</span>
<div style="left:1740.2px;top:552.1px;width:16.6px;height:16.6px;background:#117865;border-radius:3px;border:1px solid #5c7f78;box-sizing:border-box;"></div>
<svg style="left:0;top:0" width="1938" height="1038" viewBox="0 0 1938 1038"><path d="M1743.8 560.6l3.5 3.5 6.4-7" fill="none" stroke="#fff" stroke-width="1.6"/></svg>
<svg style="left:0;top:0" width="1938" height="1038" viewBox="0 0 1938 1038"><rect x="1768.7" y="551.1" width="15.2" height="17.8" rx="3.2" fill="none" stroke="#252423" stroke-width="1.8"/><rect x="1771.8" y="554.2" width="9" height="3.6" rx="1.4" fill="none" stroke="#252423" stroke-width="1.5"/><g fill="#252423"><circle cx="1772.2" cy="562.0" r="1.2"/><circle cx="1776.3" cy="562.0" r="1.2"/><circle cx="1780.4" cy="562.0" r="1.2"/><circle cx="1772.2" cy="566.0" r="1.2"/><circle cx="1776.3" cy="566.0" r="1.2"/><circle cx="1780.4" cy="566.0" r="1.2"/></g></svg>
<span style="left:1793.0px;top:553.0px;font-size:16.4px;color:#252423;transform:scaleX(1.0478);">Net Profit</span>
<div style="left:1740.2px;top:585.75px;width:16.6px;height:16.6px;background:#117865;border-radius:3px;border:1px solid #5c7f78;box-sizing:border-box;"></div>
<svg style="left:0;top:0" width="1938" height="1038" viewBox="0 0 1938 1038"><path d="M1743.8 594.2l3.5 3.5 6.4-7" fill="none" stroke="#fff" stroke-width="1.6"/></svg>
<svg style="left:0;top:0" width="1938" height="1038" viewBox="0 0 1938 1038"><rect x="1768.7" y="584.7" width="15.2" height="17.8" rx="3.2" fill="none" stroke="#252423" stroke-width="1.8"/><rect x="1771.8" y="587.8" width="9" height="3.6" rx="1.4" fill="none" stroke="#252423" stroke-width="1.5"/><g fill="#252423"><circle cx="1772.2" cy="595.6" r="1.2"/><circle cx="1776.3" cy="595.6" r="1.2"/><circle cx="1780.4" cy="595.6" r="1.2"/><circle cx="1772.2" cy="599.6" r="1.2"/><circle cx="1776.3" cy="599.6" r="1.2"/><circle cx="1780.4" cy="599.6" r="1.2"/></g></svg>
<span style="left:1793.0px;top:587.0px;font-size:16.4px;color:#252423;transform:scaleX(0.9785);">NP%</span>
<div style="left:1740.2px;top:619.4000000000001px;width:16.6px;height:16.6px;background:#f8f7f6;border:1px solid #8a8886;border-radius:3px;box-sizing:border-box;"></div>
<svg style="left:0;top:0" width="1938" height="1038" viewBox="0 0 1938 1038"><rect x="1768.7" y="618.4" width="15.2" height="17.8" rx="3.2" fill="none" stroke="#252423" stroke-width="1.8"/><rect x="1771.8" y="621.5" width="9" height="3.6" rx="1.4" fill="none" stroke="#252423" stroke-width="1.5"/><g fill="#252423"><circle cx="1772.2" cy="629.3" r="1.2"/><circle cx="1776.3" cy="629.3" r="1.2"/><circle cx="1780.4" cy="629.3" r="1.2"/><circle cx="1772.2" cy="633.3" r="1.2"/><circle cx="1776.3" cy="633.3" r="1.2"/><circle cx="1780.4" cy="633.3" r="1.2"/></g></svg>
<span style="left:1794.0px;top:620.0px;font-size:16.4px;color:#252423;transform:scaleX(0.9716);">Other Expenses</span>
<div style="left:1740.2px;top:653.05px;width:16.6px;height:16.6px;background:#117865;border-radius:3px;border:1px solid #5c7f78;box-sizing:border-box;"></div>
<svg style="left:0;top:0" width="1938" height="1038" viewBox="0 0 1938 1038"><path d="M1743.8 661.5l3.5 3.5 6.4-7" fill="none" stroke="#fff" stroke-width="1.6"/></svg>
<svg style="left:0;top:0" width="1938" height="1038" viewBox="0 0 1938 1038"><rect x="1768.7" y="652.0" width="15.2" height="17.8" rx="3.2" fill="none" stroke="#252423" stroke-width="1.8"/><rect x="1771.8" y="655.1" width="9" height="3.6" rx="1.4" fill="none" stroke="#252423" stroke-width="1.5"/><g fill="#252423"><circle cx="1772.2" cy="662.9" r="1.2"/><circle cx="1776.3" cy="662.9" r="1.2"/><circle cx="1780.4" cy="662.9" r="1.2"/><circle cx="1772.2" cy="666.9" r="1.2"/><circle cx="1776.3" cy="666.9" r="1.2"/><circle cx="1780.4" cy="666.9" r="1.2"/></g></svg>
<span style="left:1794.0px;top:654.0px;font-size:16.4px;color:#252423;transform:scaleX(0.9067);">Sales</span>
<div style="left:1740.2px;top:686.7px;width:16.6px;height:16.6px;background:#f8f7f6;border:1px solid #8a8886;border-radius:3px;box-sizing:border-box;"></div>
<svg style="left:0;top:0" width="1938" height="1038" viewBox="0 0 1938 1038"><rect x="1768.7" y="685.7" width="15.2" height="17.8" rx="3.2" fill="none" stroke="#252423" stroke-width="1.8"/><rect x="1771.8" y="688.8" width="9" height="3.6" rx="1.4" fill="none" stroke="#252423" stroke-width="1.5"/><g fill="#252423"><circle cx="1772.2" cy="696.6" r="1.2"/><circle cx="1776.3" cy="696.6" r="1.2"/><circle cx="1780.4" cy="696.6" r="1.2"/><circle cx="1772.2" cy="700.6" r="1.2"/><circle cx="1776.3" cy="700.6" r="1.2"/><circle cx="1780.4" cy="700.6" r="1.2"/></g></svg>
<span style="left:1794.0px;top:688.0px;font-size:16.4px;color:#252423;transform:scaleX(0.8844);">Sales LY</span>
<div style="left:1740.2px;top:720.35px;width:16.6px;height:16.6px;background:#117865;border-radius:3px;border:1px solid #5c7f78;box-sizing:border-box;"></div>
<svg style="left:0;top:0" width="1938" height="1038" viewBox="0 0 1938 1038"><path d="M1743.8 728.9l3.5 3.5 6.4-7" fill="none" stroke="#fff" stroke-width="1.6"/></svg>
<svg style="left:0;top:0" width="1938" height="1038" viewBox="0 0 1938 1038"><rect x="1768.7" y="719.3" width="15.2" height="17.8" rx="3.2" fill="none" stroke="#252423" stroke-width="1.8"/><rect x="1771.8" y="722.4" width="9" height="3.6" rx="1.4" fill="none" stroke="#252423" stroke-width="1.5"/><g fill="#252423"><circle cx="1772.2" cy="730.2" r="1.2"/><circle cx="1776.3" cy="730.2" r="1.2"/><circle cx="1780.4" cy="730.2" r="1.2"/><circle cx="1772.2" cy="734.2" r="1.2"/><circle cx="1776.3" cy="734.2" r="1.2"/><circle cx="1780.4" cy="734.2" r="1.2"/></g></svg>
<span style="left:1794.0px;top:721.0px;font-size:16.4px;color:#252423;transform:scaleX(0.9783);">Target</span>
<div style="left:1740.2px;top:754.0px;width:16.6px;height:16.6px;background:#f8f7f6;border:1px solid #8a8886;border-radius:3px;box-sizing:border-box;"></div>
<svg style="left:0;top:0" width="1938" height="1038" viewBox="0 0 1938 1038"><rect x="1768.7" y="753.0" width="15.2" height="17.8" rx="3.2" fill="none" stroke="#252423" stroke-width="1.8"/><rect x="1771.8" y="756.1" width="9" height="3.6" rx="1.4" fill="none" stroke="#252423" stroke-width="1.5"/><g fill="#252423"><circle cx="1772.2" cy="763.9" r="1.2"/><circle cx="1776.3" cy="763.9" r="1.2"/><circle cx="1780.4" cy="763.9" r="1.2"/><circle cx="1772.2" cy="767.9" r="1.2"/><circle cx="1776.3" cy="767.9" r="1.2"/><circle cx="1780.4" cy="767.9" r="1.2"/></g></svg>
<span style="left:1794.0px;top:755.0px;font-size:16.4px;color:#252423;">Total Invoices</span>
<svg style="left:0;top:0" width="1938" height="1038" viewBox="0 0 1938 1038"><path d="M1701.2 788.8l8.2 8.2-8.2 8.2" fill="none" stroke="#252423" stroke-width="1.4"/></svg>
<svg style="left:0;top:0" width="1938" height="1038" viewBox="0 0 1938 1038"><g fill="none" stroke="#252423" stroke-width="1.5"><rect x="1719.5" y="789.2" width="15.8" height="15.8" rx="3"/><path d="M1719.5 794.5h15.8M1719.5 799.7h15.8M1724.8 789.2v15.8M1730.0 789.2v15.8"/></g></svg>
<span style="left:1743.7px;top:788.0px;font-size:16.4px;color:#252423;transform:scaleX(0.8891);">F_Sales</span>
<svg style="left:0;top:0" width="1938" height="1038" viewBox="0 0 1938 1038"><path d="M1701.2 822.4l8.2 8.2-8.2 8.2" fill="none" stroke="#252423" stroke-width="1.4"/></svg>
<svg style="left:0;top:0" width="1938" height="1038" viewBox="0 0 1938 1038"><g fill="none" stroke="#252423" stroke-width="1.3"><path d="M1727.8 838.6H1722.5Q1719.5 838.6 1719.5 835.6V825.8Q1719.5 822.8 1722.5 822.8H1732.3Q1735.3 822.8 1735.3 825.8V827.1"/><path d="M1719.5 828.1H1728.8M1719.5 833.3H1728.8M1724.8 822.8V838.6M1730.0 822.8V827.6"/></g><rect x="1729.8" y="828.3" width="8.4" height="12.4" rx="1.4" fill="#252423"/><rect x="1731.4" y="830.1" width="5.2" height="1.6" fill="#f3f2f1"/><g fill="#f3f2f1"><rect x="1731.3" y="833.3" width="1.1" height="1.1"/><rect x="1733.4" y="833.3" width="1.1" height="1.1"/><rect x="1735.5" y="833.3" width="1.1" height="1.1"/><rect x="1731.3" y="835.6" width="1.1" height="1.1"/><rect x="1733.4" y="835.6" width="1.1" height="1.1"/><rect x="1735.5" y="835.6" width="1.1" height="1.1"/><rect x="1731.3" y="837.9" width="1.1" height="1.1"/><rect x="1733.4" y="837.9" width="1.1" height="1.1"/><rect x="1735.5" y="837.9" width="1.1" height="1.1"/></g></svg>
<span style="left:1743.6px;top:822.0px;font-size:16.4px;color:#252423;transform:scaleX(0.9839);">M_Calendar</span>
<svg style="left:0;top:0" width="1938" height="1038" viewBox="0 0 1938 1038"><path d="M1701.2 856.0l8.2 8.2-8.2 8.2" fill="none" stroke="#252423" stroke-width="1.4"/></svg>
<svg style="left:0;top:0" width="1938" height="1038" viewBox="0 0 1938 1038"><g fill="none" stroke="#252423" stroke-width="1.5"><rect x="1719.5" y="856.5" width="15.8" height="15.8" rx="3"/><path d="M1719.5 861.8h15.8M1719.5 867.0h15.8M1724.8 856.5v15.8M1730.0 856.5v15.8"/></g></svg>
<span style="left:1743.6px;top:856.0px;font-size:16.4px;color:#252423;">M_Customer</span>
<svg style="left:0;top:0" width="1938" height="1038" viewBox="0 0 1938 1038"><path d="M1701.2 889.7l8.2 8.2-8.2 8.2" fill="none" stroke="#252423" stroke-width="1.4"/></svg>
<svg style="left:0;top:0" width="1938" height="1038" viewBox="0 0 1938 1038"><g fill="none" stroke="#252423" stroke-width="1.5"><rect x="1719.5" y="890.1" width="15.8" height="15.8" rx="3"/><path d="M1719.5 895.4h15.8M1719.5 900.6h15.8M1724.8 890.1v15.8M1730.0 890.1v15.8"/></g></svg>
<span style="left:1743.6px;top:889.0px;font-size:16.4px;color:#252423;">M_Products</span>
<svg style="left:0;top:0" width="1938" height="1038" viewBox="0 0 1938 1038"><path d="M1701.2 923.3l8.2 8.2-8.2 8.2" fill="none" stroke="#252423" stroke-width="1.4"/></svg>
<svg style="left:0;top:0" width="1938" height="1038" viewBox="0 0 1938 1038"><g fill="none" stroke="#252423" stroke-width="1.5"><rect x="1719.5" y="923.8" width="15.8" height="15.8" rx="3"/><path d="M1719.5 929.0h15.8M1719.5 934.2h15.8M1724.8 923.8v15.8M1730.0 923.8v15.8"/></g></svg>
<span style="left:1743.7px;top:923.0px;font-size:16.4px;color:#252423;transform:scaleX(0.9426);">M_SalesRep</span>
<svg style="left:0;top:0" width="1938" height="1038" viewBox="0 0 1938 1038"><path d="M1701.2 957.0l8.2 8.2-8.2 8.2" fill="none" stroke="#252423" stroke-width="1.4"/></svg>
<svg style="left:0;top:0" width="1938" height="1038" viewBox="0 0 1938 1038"><g fill="none" stroke="#252423" stroke-width="1.3"><path d="M1727.8 973.2H1722.5Q1719.5 973.2 1719.5 970.2V960.4Q1719.5 957.4 1722.5 957.4H1732.3Q1735.3 957.4 1735.3 960.4V961.7"/><path d="M1719.5 962.7H1728.8M1719.5 967.9H1728.8M1724.8 957.4V973.2M1730.0 957.4V962.2"/></g><rect x="1729.8" y="962.9" width="8.4" height="12.4" rx="1.4" fill="#252423"/><rect x="1731.4" y="964.7" width="5.2" height="1.6" fill="#f3f2f1"/><g fill="#f3f2f1"><rect x="1731.3" y="967.9" width="1.1" height="1.1"/><rect x="1733.4" y="967.9" width="1.1" height="1.1"/><rect x="1735.5" y="967.9" width="1.1" height="1.1"/><rect x="1731.3" y="970.2" width="1.1" height="1.1"/><rect x="1733.4" y="970.2" width="1.1" height="1.1"/><rect x="1735.5" y="970.2" width="1.1" height="1.1"/><rect x="1731.3" y="972.5" width="1.1" height="1.1"/><rect x="1733.4" y="972.5" width="1.1" height="1.1"/><rect x="1735.5" y="972.5" width="1.1" height="1.1"/></g></svg>
<span style="left:1744.6px;top:957.0px;font-size:16.4px;color:#252423;transform:scaleX(0.8906);">Sales LY</span>
<svg style="left:0;top:0" width="1938" height="1038" viewBox="0 0 1938 1038"><path d="M1889.5 957.8L1897 972.2H1882z" fill="none" stroke="#c62f3a" stroke-width="1.2" stroke-linejoin="round"/><path d="M1889.5 962.6v5.2" stroke="#c62f3a" stroke-width="1.2"/><circle cx="1889.5" cy="969.8" r="0.8" fill="#c62f3a"/></svg>
<div style="left:244.3px;top:946px;width:342.4px;height:49px;background:#fff;"></div>
<div style="left:244px;top:946px;width:1px;height:49px;background:#d2d0ce;"></div>
<div style="left:351px;top:946px;width:1px;height:49px;background:#d2d0ce;"></div>
<div style="left:458.3px;top:946px;width:1px;height:49px;background:#d2d0ce;"></div>
<div style="left:458.8px;top:990px;width:128px;height:5px;background:#117865;"></div>
<div style="left:586.7px;top:947px;width:55.2px;height:48px;background:#117865;"></div>
<svg style="left:0;top:0" width="1938" height="1038" viewBox="0 0 1938 1038"><path d="M606.6 970.4H621.8M614.2 962.8V978" stroke="#fff" stroke-width="3.8"/></svg>
<span style="left:273.1px;top:964.0px;font-size:17px;color:#252423;transform:scaleX(0.9137);">Page 1</span>
<span style="left:379.4px;top:964.0px;font-size:17px;color:#252423;transform:scaleX(0.9270);">Page 2</span>
<span style="left:486.7px;top:964.0px;font-size:17px;color:#252423;-webkit-text-stroke:0.68px #252423;transform:scaleX(0.9962);">Overview</span>
<svg style="left:0;top:0" width="1938" height="1038" viewBox="0 0 1938 1038"><g fill="none" stroke="#484644" stroke-width="1.6"><rect x="83.4" y="957" width="25.4" height="15.4"/><path d="M96 972.4V975M91.2 975.2H101"/></g></svg>
<div style="left:80px;top:985px;width:34px;height:3.8px;background:#117865;border-radius:2px;"></div>
<svg style="left:0;top:0" width="1938" height="1038" viewBox="0 0 1938 1038"><g fill="none" stroke="#484644" stroke-width="1.6"><rect x="150.6" y="953.8" width="16" height="26" rx="1.6"/><path d="M157 975.8H160.2"/></g></svg>
<svg style="left:0;top:0" width="1938" height="1038" viewBox="0 0 1938 1038"><path d="M204.4 965.6V976.2L198.2 970.9z M227.8 965.6V976.2L234 970.9z" fill="#c8c6c4"/></svg>
<span style="left:14.3px;top:1006.0px;font-size:16.3px;color:#484644;transform:scaleX(0.9936);">Page 3 of 3</span>
<svg style="left:0;top:0" width="1938" height="1038" viewBox="0 0 1938 1038"><g stroke="#605e5c" fill="none"><path d="M1633.8 1012.8H1640" stroke-width="2"/><path d="M1646 1012.5H1786" stroke-width="1.2"/><path d="M1716.4 1009.5V1015.8" stroke-width="1.1"/><path d="M1794.4 1012.7H1805M1799.7 1007.3V1018.1" stroke-width="2.1"/></g></svg>
<div style="left:1690px;top:1005px;width:6.2px;height:15px;background:#605e5c;"></div>
<span style="left:1824.8px;top:1004.0px;font-size:16.2px;color:#605e5c;transform:scaleX(0.9561);">70%</span>
<svg style="left:0;top:0" width="1938" height="1038" viewBox="0 0 1938 1038"><g fill="none" stroke="#484644" stroke-width="1.5"><rect x="1883" y="1005.6" width="21" height="14.6"/><path d="M1886 1011.4V1008.4H1889.6M1898.4 1008.4H1901.6V1011.4M1886 1014.6V1017.6H1889.6M1898.4 1017.6H1901.6V1014.6" stroke-width="1.3"/></g></svg>
<div style="left:9px;top:233px;width:1920px;height:6px;background:linear-gradient(rgba(0,0,0,.13),rgba(0,0,0,.06) 35%,rgba(0,0,0,.02) 70%,rgba(0,0,0,0));"></div>
</body></html>
